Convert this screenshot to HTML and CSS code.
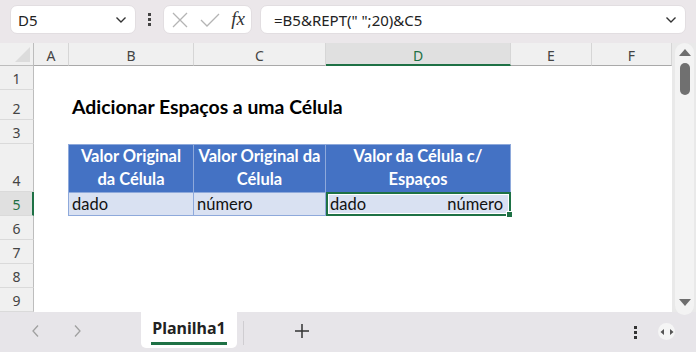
FILE: index.html
```html
<!DOCTYPE html>
<html lang="pt-BR">
<head>
    <meta charset="UTF-8">
    <title>Planilha1</title>
    <link rel="stylesheet" href="styles.css">
</head>
<body>
    <div class="topbar">
        <div class="namebox">
            <span>D5</span>
            <svg class="chev" width="12" height="8" viewBox="0 0 12 8"><path d="M1.5 1.5 L6 6 L10.5 1.5" fill="none" stroke="#333" stroke-width="1.4"/></svg>
        </div>
        <div class="vdots"><i></i><i></i><i></i></div>
        <div class="fxbox">
            <svg width="18" height="18" viewBox="0 0 18 18"><path d="M2 2 L16 16 M16 2 L2 16" stroke="#b4b4b4" stroke-width="1.3" fill="none"/></svg>
            <svg width="22" height="18" viewBox="0 0 22 18"><path d="M2 9 L8 15 L20 3" stroke="#b4b4b4" stroke-width="1.3" fill="none"/></svg>
            <span class="fx">fx</span>
        </div>
        <div class="formula">
            <span>=B5&amp;REPT(" ";20)&amp;C5</span>
            <svg class="chev" width="12" height="8" viewBox="0 0 12 8"><path d="M1.5 1.5 L6 6 L10.5 1.5" fill="none" stroke="#333" stroke-width="1.4"/></svg>
        </div>
    </div>

    <div class="sheet-area">
        <div class="grid">
            <div class="corner"><span class="tri"></span></div>
            <div class="colhead">A</div>
            <div class="colhead">B</div>
            <div class="colhead">C</div>
            <div class="colhead active">D</div>
            <div class="colhead">E</div>
            <div class="colhead">F</div>

            <div class="rowhead r1">1</div>
            <div class="rowhead r2">2</div>
            <div class="rowhead r3">3</div>
            <div class="rowhead r4">4</div>
            <div class="rowhead r5 active">5</div>
            <div class="rowhead r6">6</div>
            <div class="rowhead r7">7</div>
            <div class="rowhead r8">8</div>
            <div class="rowhead r9">9</div>

            <div class="title">Adicionar Espaços a uma Célula</div>

            <div class="th cb">Valor Original<br>da Célula</div>
            <div class="th cc">Valor Original da<br>Célula</div>
            <div class="th cd">Valor da Célula c/<br>Espaços</div>

            <div class="td cb">dado</div>
            <div class="td cc">número</div>
            <div class="td cd selected"><span>dado</span><span>número</span><i class="handle"></i></div>
        </div>
        <div class="vscroll">
            <div class="track">
                <span class="up"></span>
                <span class="thumb"></span>
                <span class="down"></span>
            </div>
        </div>
    </div>

    <div class="tabbar">
        <div class="nav">
            <svg width="10" height="14" viewBox="0 0 10 14"><path d="M7 1.5 L2 7 L7 12.5" fill="none" stroke="#a0a0a0" stroke-width="1.3"/></svg>
            <svg width="10" height="14" viewBox="0 0 10 14"><path d="M3 1.5 L8 7 L3 12.5" fill="none" stroke="#a0a0a0" stroke-width="1.3"/></svg>
        </div>
        <div class="tab">Planilha1</div>
        <div class="sep"></div>
        <div class="add">
            <svg width="16" height="16" viewBox="0 0 16 16"><path d="M8 1 V15 M1 8 H15" stroke="#333" stroke-width="1.5"/></svg>
        </div>
        <div class="spacer"></div>
        <div class="vdots small"><i></i><i></i><i></i></div>
        <div class="hsplit">
            <svg width="14" height="8" viewBox="0 0 14 8"><path d="M4 1 L0.5 4 L4 7 Z M10 1 L13.5 4 L10 7 Z" fill="#555"/></svg>
        </div>
    </div>
</body>
</html>
```

FILE: styles.css
```css
body {
    margin: 0;
    width: 696px;
    height: 352px;
    overflow: hidden;
    background: #ebe7ea;
    font-family: "Noto Sans", "Open Sans", sans-serif;
    color: #333;
}
.topbar {
    height: 43px;
    box-sizing: border-box;
    padding: 5px 10px 0 10px;
    display: flex;
    align-items: flex-start;
}
.namebox, .fxbox, .formula {
    height: 29px;
    box-sizing: border-box;
    background: #fff;
    border: 1px solid #e2dee1;
    border-radius: 7px;
    display: flex;
    align-items: center;
}
.namebox {
    width: 126px;
    padding: 0 8px 0 7px;
    justify-content: space-between;
    font-size: 15px;
    color: #222;
}
.vdots {
    width: 27px;
    height: 29px;
    display: flex;
    flex-direction: column;
    align-items: center;
    justify-content: center;
    gap: 2px;
}
.vdots i {
    width: 3px;
    height: 3px;
    background: #444;
}
.fxbox {
    width: 89px;
    padding: 0 6px 0 7px;
    justify-content: space-between;
}
.fx {
    font-family: "Liberation Serif", serif;
    font-style: italic;
    font-size: 19px;
    color: #333;
    margin-top: -2px;
}
.formula {
    width: 426px;
    margin-left: 8px;
    padding: 0 8px 0 13px;
    justify-content: space-between;
    font-size: 15px;
    color: #222;
}

.sheet-area {
    height: 269px;
    display: flex;
}
.grid {
    width: 672px;
    background: #fff;
    display: grid;
    grid-template-columns: 34px 35px 125px 132px 185px 81px 80px;
    grid-template-rows: 23px 24px 30px 24px 48px 24px 24px 24px 24px 24px;
    font-family: "Lato", "Liberation Sans", sans-serif;
    font-size: 16.5px;
    color: #111;
}
.corner {
    grid-column: 1;
    grid-row: 1;
    background: #f0f0f0;
    border-right: 1px solid #bdbdbd;
    border-bottom: 1px solid #bdbdbd;
    position: relative;
}
.tri {
    position: absolute;
    right: 3px;
    bottom: 3px;
    width: 0;
    height: 0;
    border-left: 15px solid transparent;
    border-bottom: 15px solid #dcdcdc;
}
.colhead {
    grid-row: 1;
    background: #f0f0f0;
    border-right: 1px solid #d6d6d6;
    border-bottom: 1px solid #a9a9a9;
    font-family: "Noto Sans", sans-serif;
    font-size: 14px;
    color: #444;
    display: flex;
    align-items: center;
    justify-content: center;
    padding-top: 2px;
    box-sizing: border-box;
}
.colhead.active {
    background: #e0e0e0;
    color: #1e7145;
    border-bottom: 2px solid #1e7145;
    padding-top: 3px;
}
.rowhead {
    grid-column: 1;
    background: #f0f0f0;
    border-right: 1px solid #bdbdbd;
    border-bottom: 1px solid #dadada;
    font-family: "Noto Sans", sans-serif;
    font-size: 14px;
    color: #444;
    display: flex;
    align-items: flex-end;
    justify-content: center;
    padding-bottom: 1px;
    box-sizing: border-box;
}
.rowhead.active {
    background: #e0e0e0;
    color: #1e7145;
    border-right: 2px solid #1e7145;
    padding-left: 1px;
}
.r1 { grid-row: 2; }
.r2 { grid-row: 3; }
.r3 { grid-row: 4; }
.r4 { grid-row: 5; }
.r5 { grid-row: 6; }
.r6 { grid-row: 7; }
.r7 { grid-row: 8; }
.r8 { grid-row: 9; }
.r9 { grid-row: 10; }

.title {
    grid-column: 3 / span 4;
    grid-row: 3;
    font-weight: bold;
    font-size: 19.4px;
    padding-left: 3px;
    align-self: end;
    padding-bottom: 2px;
    white-space: nowrap;
    color: #000;
}
.cb { grid-column: 3; }
.cc { grid-column: 4; }
.cd { grid-column: 5; }
.th {
    grid-row: 5;
    background: #4472c4;
    color: #fff;
    font-weight: bold;
    text-align: center;
    line-height: 23px;
    border-right: 1px solid #8ea9db;
    border-top: 1px solid #8ea9db;
    box-sizing: border-box;
    display: flex;
    align-items: flex-end;
    justify-content: center;
    padding-bottom: 1px;
    white-space: nowrap;
}
.th.cb, .td.cb {
    border-left: 1px solid #8ea9db;
    margin-left: -1px;
}
.td {
    grid-row: 6;
    background: #d9e1f2;
    border-right: 1px solid #8ea9db;
    border-top: 1px solid #8ea9db;
    border-bottom: 1px solid #8ea9db;
    box-sizing: border-box;
    padding: 0 3px;
    display: flex;
    align-items: center;
}
.td.selected {
    border: 2px solid #1e7145;
    box-shadow: inset 0 0 0 1px #fff;
    justify-content: space-between;
    padding: 0 6px 0 2px;
    position: relative;
}
.handle {
    position: absolute;
    right: -4px;
    bottom: -4px;
    width: 5px;
    height: 5px;
    background: #1e7145;
    border: 1px solid #fff;
}

.vscroll {
    width: 24px;
    background: #e9e9e9;
    display: flex;
    justify-content: center;
    padding: 0 2px 0 3px;
    box-sizing: border-box;
}
.track {
    width: 19px;
    height: 272px;
    background: #f3f3f3;
    border-radius: 10px;
    display: flex;
    flex-direction: column;
    align-items: center;
    position: relative;
    z-index: 1;
}
.up, .down {
    width: 0;
    height: 0;
    border-left: 6px solid transparent;
    border-right: 6px solid transparent;
}
.up {
    border-bottom: 7px solid #6e6e6e;
    margin-top: 6px;
}
.thumb {
    width: 10px;
    height: 32px;
    background: #707070;
    border-radius: 5px;
    margin-top: 7px;
}
.down {
    border-top: 7px solid #6e6e6e;
    margin-top: auto;
    margin-bottom: 9px;
}

.tabbar {
    height: 40px;
    background: #e7e5e9;
    display: flex;
    align-items: flex-start;
}
.nav {
    width: 141px;
    height: 38px;
    display: flex;
    align-items: center;
    gap: 31px;
    padding-left: 31px;
    box-sizing: border-box;
}
.tab {
    width: 96px;
    height: 36px;
    box-sizing: border-box;
    background: #fff;
    border-radius: 0 0 5px 5px;
    font-weight: bold;
    font-size: 16px;
    color: #222;
    display: flex;
    align-items: center;
    justify-content: center;
    position: relative;
    padding-bottom: 4px;
}
.tab::after {
    content: "";
    position: absolute;
    left: 10px;
    right: 10px;
    bottom: 3px;
    height: 3px;
    background: #1e7145;
}
.sep {
    width: 1px;
    height: 24px;
    background: #cfcdd1;
    margin: 9px 0 0 6px;
}
.add {
    width: 116px;
    height: 38px;
    display: flex;
    align-items: center;
    justify-content: center;
}
.spacer {
    flex: 1;
}
.vdots.small {
    width: 8px;
    height: 40px;
    gap: 2px;
}
.vdots.small i {
    width: 3px;
    height: 3px;
    background: #333;
}
.hsplit {
    width: 17px;
    height: 17px;
    border-radius: 50%;
    background: #f5f5f5;
    display: flex;
    align-items: center;
    justify-content: center;
    margin: 11px 21px 0 19px;
}
```
